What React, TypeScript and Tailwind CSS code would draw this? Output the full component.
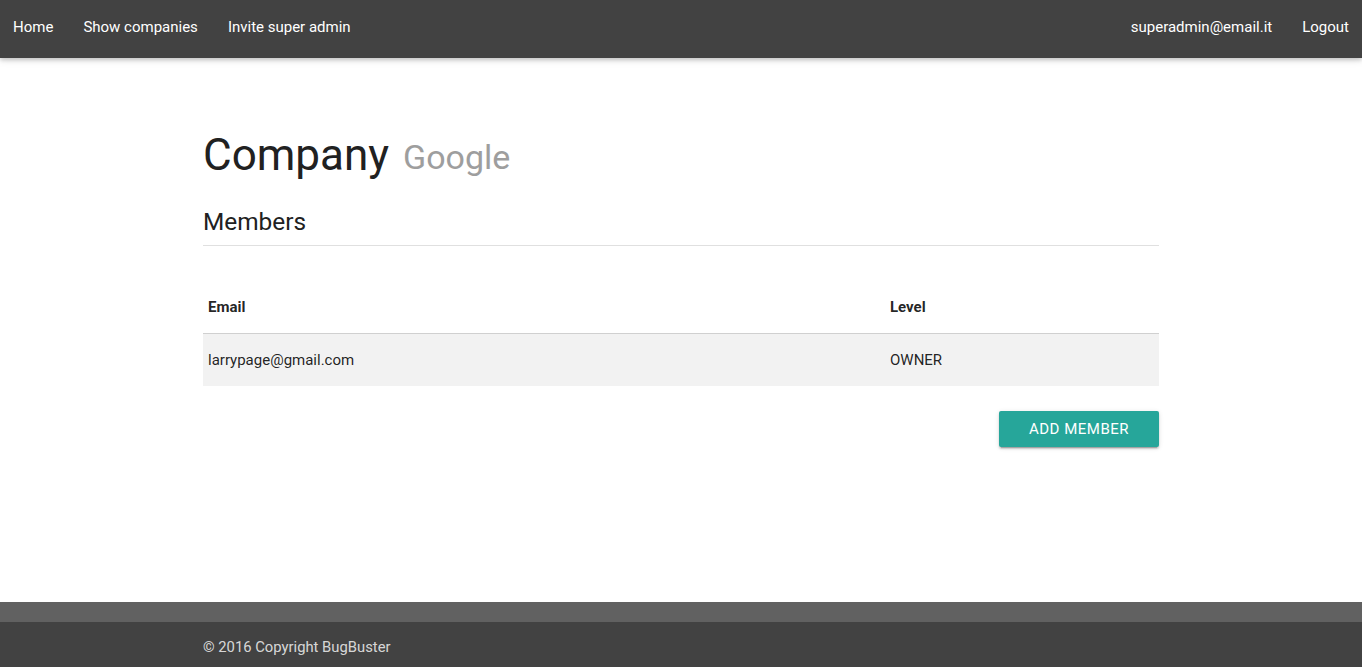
export default function App() {
  return (
    <div className="min-h-screen flex flex-col bg-white text-[rgba(0,0,0,0.87)]" style={{ fontFamily: "Roboto, 'Liberation Sans', sans-serif" }}>
      <nav className="h-[58px] bg-[#424242] text-white text-[15px] flex items-start justify-between shadow-[0_2px_4px_rgba(0,0,0,0.16),0_2px_8px_rgba(0,0,0,0.12)] relative z-10">
        <ul className="flex -ml-[2px]">
          <li><a className="px-[15px] leading-[54px] block">Home</a></li>
          <li><a className="px-[15px] leading-[54px] block">Show companies</a></li>
          <li><a className="px-[15px] leading-[54px] block">Invite super admin</a></li>
        </ul>
        <ul className="flex -mr-[2px]">
          <li><a className="px-[15px] leading-[54px] block">superadmin@email.it</a></li>
          <li><a className="px-[15px] leading-[54px] block">Logout</a></li>
        </ul>
      </nav>
      <main className="flex-1">
        <div className="w-[956px] mx-auto pt-[71px]">
          <h1 className="text-[44px] leading-[52px] font-normal text-[#212121]">
            Company <span className="text-[34px] text-[#9e9e9e] ml-[3px] relative -top-[1px]">Google</span>
          </h1>
          <h2 className="mt-[22px] text-[24.4px] leading-[32px] pb-[7px] border-b border-[#e0e0e0] text-[#212121]">Members</h2>
          <table className="mt-[35px] w-full text-[15px] border-collapse">
            <thead>
              <tr className="border-b border-[#d0d0d0]">
                <th className="w-[682px] text-left font-bold px-[5px] py-[15px] leading-[22px]">Email</th>
                <th className="text-left font-bold px-[5px] py-[15px] leading-[22px]">Level</th>
              </tr>
            </thead>
            <tbody>
              <tr className="bg-[#f2f2f2]">
                <td className="px-[5px] pt-[16px] pb-[15px] leading-[21px]">larrypage@gmail.com</td>
                <td className="px-[5px] pt-[16px] pb-[15px] leading-[21px]">OWNER</td>
              </tr>
            </tbody>
          </table>
          <div className="flex justify-end mt-[25px]">
            <button className="w-[160px] h-[36px] rounded-[2px] bg-[#26a69a] text-white text-[15px] tracking-[0.5px] uppercase shadow-[0_2px_2px_rgba(0,0,0,0.14),0_1px_5px_rgba(0,0,0,0.12),0_3px_1px_-2px_rgba(0,0,0,0.2)]">
              Add Member
            </button>
          </div>
        </div>
      </main>
      <footer>
        <div className="h-[20px] bg-[#616161]" />
        <div className="h-[45px] bg-[#424242] flex items-center pt-[5px]">
          <div className="w-[956px] mx-auto text-[14.8px] text-[rgba(255,255,255,0.8)]">© 2016 Copyright BugBuster</div>
        </div>
      </footer>
    </div>
  );
}
